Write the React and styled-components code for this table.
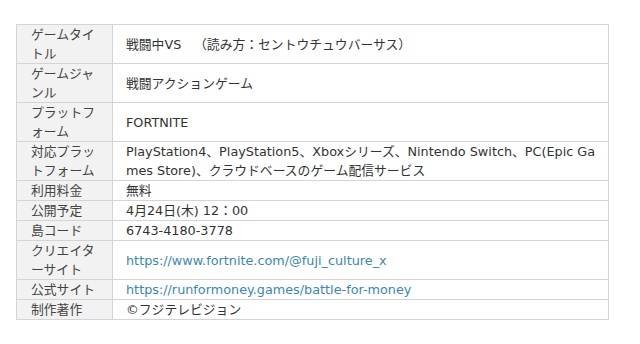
import React from "react";
import styled, { createGlobalStyle } from "styled-components";

const Global = createGlobalStyle`
  body {
    margin: 0;
    background: #fff;
    font-family: "DejaVu Sans", "Noto Sans CJK JP", sans-serif;
  }
`;

const Page = styled.div`
  padding: 24px 31px 0 16px;
`;

const Table = styled.table`
  width: 100%;
  border-collapse: collapse;
  font-size: 12.8px;
  line-height: 19px;
  color: #333;
  text-spacing-trim: space-all;
`;

const Label = styled.th`
  width: 67px;
  padding: 0 14px;
  background: #f2f2f2;
  border: 1px solid #d4d4d4;
  font-weight: 400;
  text-align: left;
  vertical-align: middle;
  color: #444;
`;

const Value = styled.td`
  padding: 0 7px 0 13px;
  border: 1px solid #d4d4d4;
  vertical-align: middle;
  word-break: break-all;
`;

const Link = styled.a`
  color: #3b87b3;
  text-decoration: none;
`;

const rows = [
  ["ゲームタイトル", "戦闘中VS\u3000（読み方：セントウチュウバーサス）"],
  ["ゲームジャンル", "戦闘アクションゲーム"],
  ["プラットフォーム", "FORTNITE"],
  [
    "対応プラットフォーム",
    "PlayStation4、PlayStation5、Xboxシリーズ、Nintendo Switch、PC(Epic Games Store)、クラウドベースのゲーム配信サービス",
  ],
  ["利用料金", "無料"],
  ["公開予定", "4月24日(木) 12：00"],
  ["島コード", "6743-4180-3778"],
  ["クリエイターサイト", "https://www.fortnite.com/@fuji_culture_x", true],
  ["公式サイト", "https://runformoney.games/battle-for-money", true],
  ["制作著作", "©フジテレビジョン"],
];

export default function App() {
  return (
    <>
      <Global />
      <Page>
        <Table>
          <tbody>
            {rows.map(([label, value, link]) => (
              <tr key={label}>
                <Label>{label}</Label>
                <Value>{link ? <Link href={value}>{value}</Link> : value}</Value>
              </tr>
            ))}
          </tbody>
        </Table>
      </Page>
    </>
  );
}
